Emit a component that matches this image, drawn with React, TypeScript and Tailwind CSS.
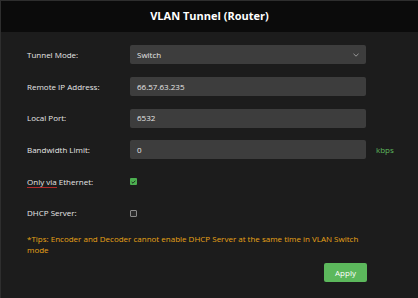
import React from "react";

const font = { fontFamily: '"Open Sans", "Noto Sans", sans-serif' };

function Row({ label, children, extra }: { label: React.ReactNode; children: React.ReactNode; extra?: React.ReactNode }) {
  return (
    <div className="flex h-[31.7px] items-center">
      <div className="w-[103px] shrink-0 text-[8px] text-[#e6e6e6]">{label}</div>
      {children}
      {extra}
    </div>
  );
}

function Field({ value, select }: { value: string; select?: boolean }) {
  return (
    <div className="flex h-[19px] w-[236px] items-center justify-between rounded-[2px] bg-[#3d3d3d] pl-[7px] pr-[6px] text-[8px] text-[#e6e6e6]">
      <span>{value}</span>
      {select && (
        <svg width="6" height="4" viewBox="0 0 6 4" className="mr-[1px]">
          <path d="M0.5 0.8 L3 3.2 L5.5 0.8" fill="none" stroke="#9a9a9a" strokeWidth="1" />
        </svg>
      )}
    </div>
  );
}

export default function App() {
  return (
    <div className="h-[298px] w-[418px] overflow-hidden bg-[#1c1c1c]" style={font}>
      <div className="flex h-full flex-col border-l border-t border-[#2e2e2e]">
        <div className="flex h-[31px] items-center justify-center bg-[#0b0b0b] text-[11px] font-bold text-white">
          VLAN Tunnel (Router)
        </div>
        <div className="flex flex-col pl-[26px] pt-[7px]">
          <Row label="Tunnel Mode:">
            <Field value="Switch" select />
          </Row>
          <Row label="Remote IP Address:">
            <Field value="66.57.63.235" />
          </Row>
          <Row label="Local Port:">
            <Field value="6532" />
          </Row>
          <Row label="Bandwidth Limit:" extra={<span className="ml-[10px] text-[8px] text-[#5cb85c]">kbps</span>}>
            <Field value="0" />
          </Row>
          <Row
            label={
              <span>
                <span className="border-b border-[#b02a2a]">Only via</span> Ethernet:
              </span>
            }
          >
            <div className="flex h-[7px] w-[7px] items-center justify-center rounded-[1px] bg-[#4caf50]">
              <svg width="5" height="4" viewBox="0 0 5 4">
                <path d="M0.6 2 L2 3.2 L4.4 0.7" fill="none" stroke="#1c1c1c" strokeWidth="0.9" />
              </svg>
            </div>
          </Row>
          <Row label="DHCP Server:">
            <div className="h-[7px] w-[7px] rounded-[1px] border border-[#8a8a8a] bg-[#2a2a2a]" />
          </Row>
          <div className="mt-[4px] w-[340px] text-[8px] leading-[11px] text-[#e8a317]">
            *Tips: Encoder and Decoder cannot enable DHCP Server at the same time in VLAN Switch mode
          </div>
          <div className="mt-[8px] flex w-[340px] justify-end">
            <div className="flex h-[19px] w-[43px] items-center justify-center rounded-[2px] bg-[#5cb85c] text-[8px] text-white">
              Apply
            </div>
          </div>
        </div>
      </div>
    </div>
  );
}
